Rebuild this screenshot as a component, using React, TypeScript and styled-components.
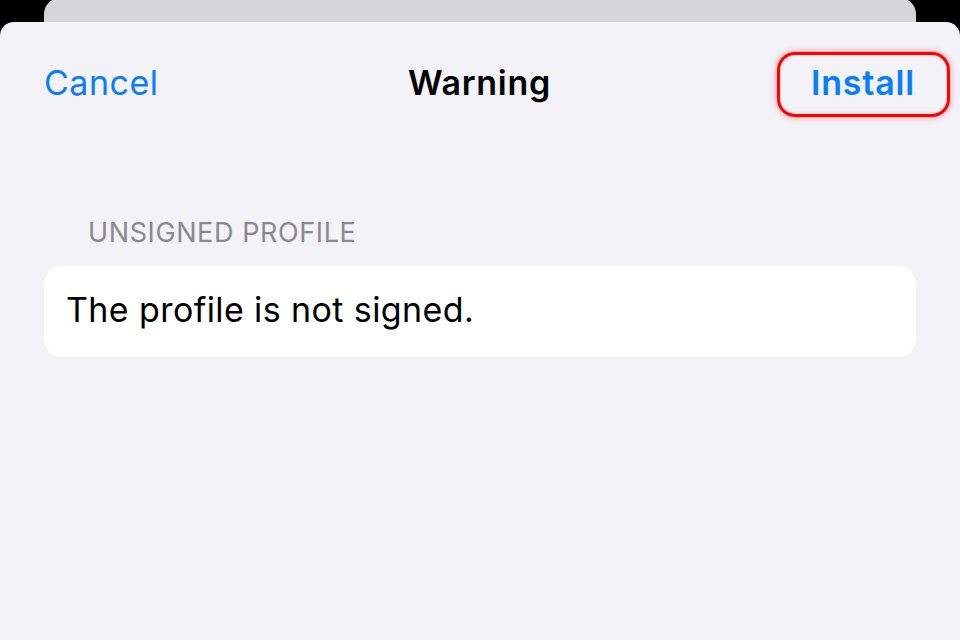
import React from "react";
import styled, { createGlobalStyle } from "styled-components";

const Global = createGlobalStyle`
  html, body { margin: 0; padding: 0; background: #000; }
  body { font-family: Inter, "Liberation Sans", Arial, sans-serif; -webkit-font-smoothing: antialiased; }
`;

const Screen = styled.div`
  width: 960px;
  height: 640px;
  overflow: hidden;
  background: #000;
  display: flex;
  flex-direction: column;
`;

const BackCard = styled.div`
  margin: -2px 44px 0;
  height: 24px;
  flex: none;
  background: #d6d5da;
  border-radius: 16px 16px 0 0;
`;

const Sheet = styled.div`
  flex: 1;
  background: #f2f2f7;
  border-radius: 14px 14px 0 0;
  display: flex;
  flex-direction: column;
`;

const NavBar = styled.div`
  height: 122px;
  padding: 1px 45px 0 44px;
  display: grid;
  grid-template-columns: 1fr auto 1fr;
  align-items: center;
  box-sizing: border-box;
  margin-top: -1px;
`;

const NavButton = styled.button<{ $align: "left" | "right"; $bold?: boolean }>`
  justify-self: ${(p) => (p.$align === "left" ? "start" : "end")};
  position: relative;
  background: none;
  border: none;
  padding: 0;
  font-family: inherit;
  font-size: 34px;
  line-height: 40px;
  font-weight: ${(p) => (p.$bold ? 600 : 400)};
  color: #0a7cff;
  letter-spacing: ${(p) => (p.$bold ? "0.8px" : "0.5px")};
`;

const Highlight = styled.span`
  position: absolute;
  left: -34px;
  right: -35px;
  top: -11px;
  bottom: -14px;
  border: 3.5px solid #ff0000;
  border-radius: 18px;
  box-shadow: 0 0 6px rgba(255, 0, 0, 0.45), inset 0 0 3px rgba(255, 0, 0, 0.3);
  pointer-events: none;
`;

const Title = styled.div`
  font-size: 34px;
  line-height: 40px;
  font-weight: 600;
  color: #000;
  letter-spacing: 0.7px;
`;

const Section = styled.div`
  padding: 74px 44px 0;
  display: flex;
  flex-direction: column;
`;

const SectionHeader = styled.div`
  padding-left: 44px;
  font-size: 27px;
  color: #8a8a8e;
  letter-spacing: 0.6px;
  line-height: 32px;
  margin-bottom: 17px;
`;

const Card = styled.div`
  background: #fff;
  border-radius: 18px;
  height: 91px;
  box-sizing: border-box;
  padding: 0 22px 4px;
  display: flex;
  align-items: center;
  font-size: 34px;
  color: #000;
  letter-spacing: 0.4px;
`;

export default function App() {
  return (
    <>
      <Global />
      <Screen>
        <BackCard />
        <Sheet>
          <NavBar>
            <NavButton $align="left">Cancel</NavButton>
            <Title>Warning</Title>
            <NavButton $align="right" $bold>
              Install
              <Highlight />
            </NavButton>
          </NavBar>
          <Section>
            <SectionHeader>UNSIGNED PROFILE</SectionHeader>
            <Card>The profile is not signed.</Card>
          </Section>
        </Sheet>
      </Screen>
    </>
  );
}
